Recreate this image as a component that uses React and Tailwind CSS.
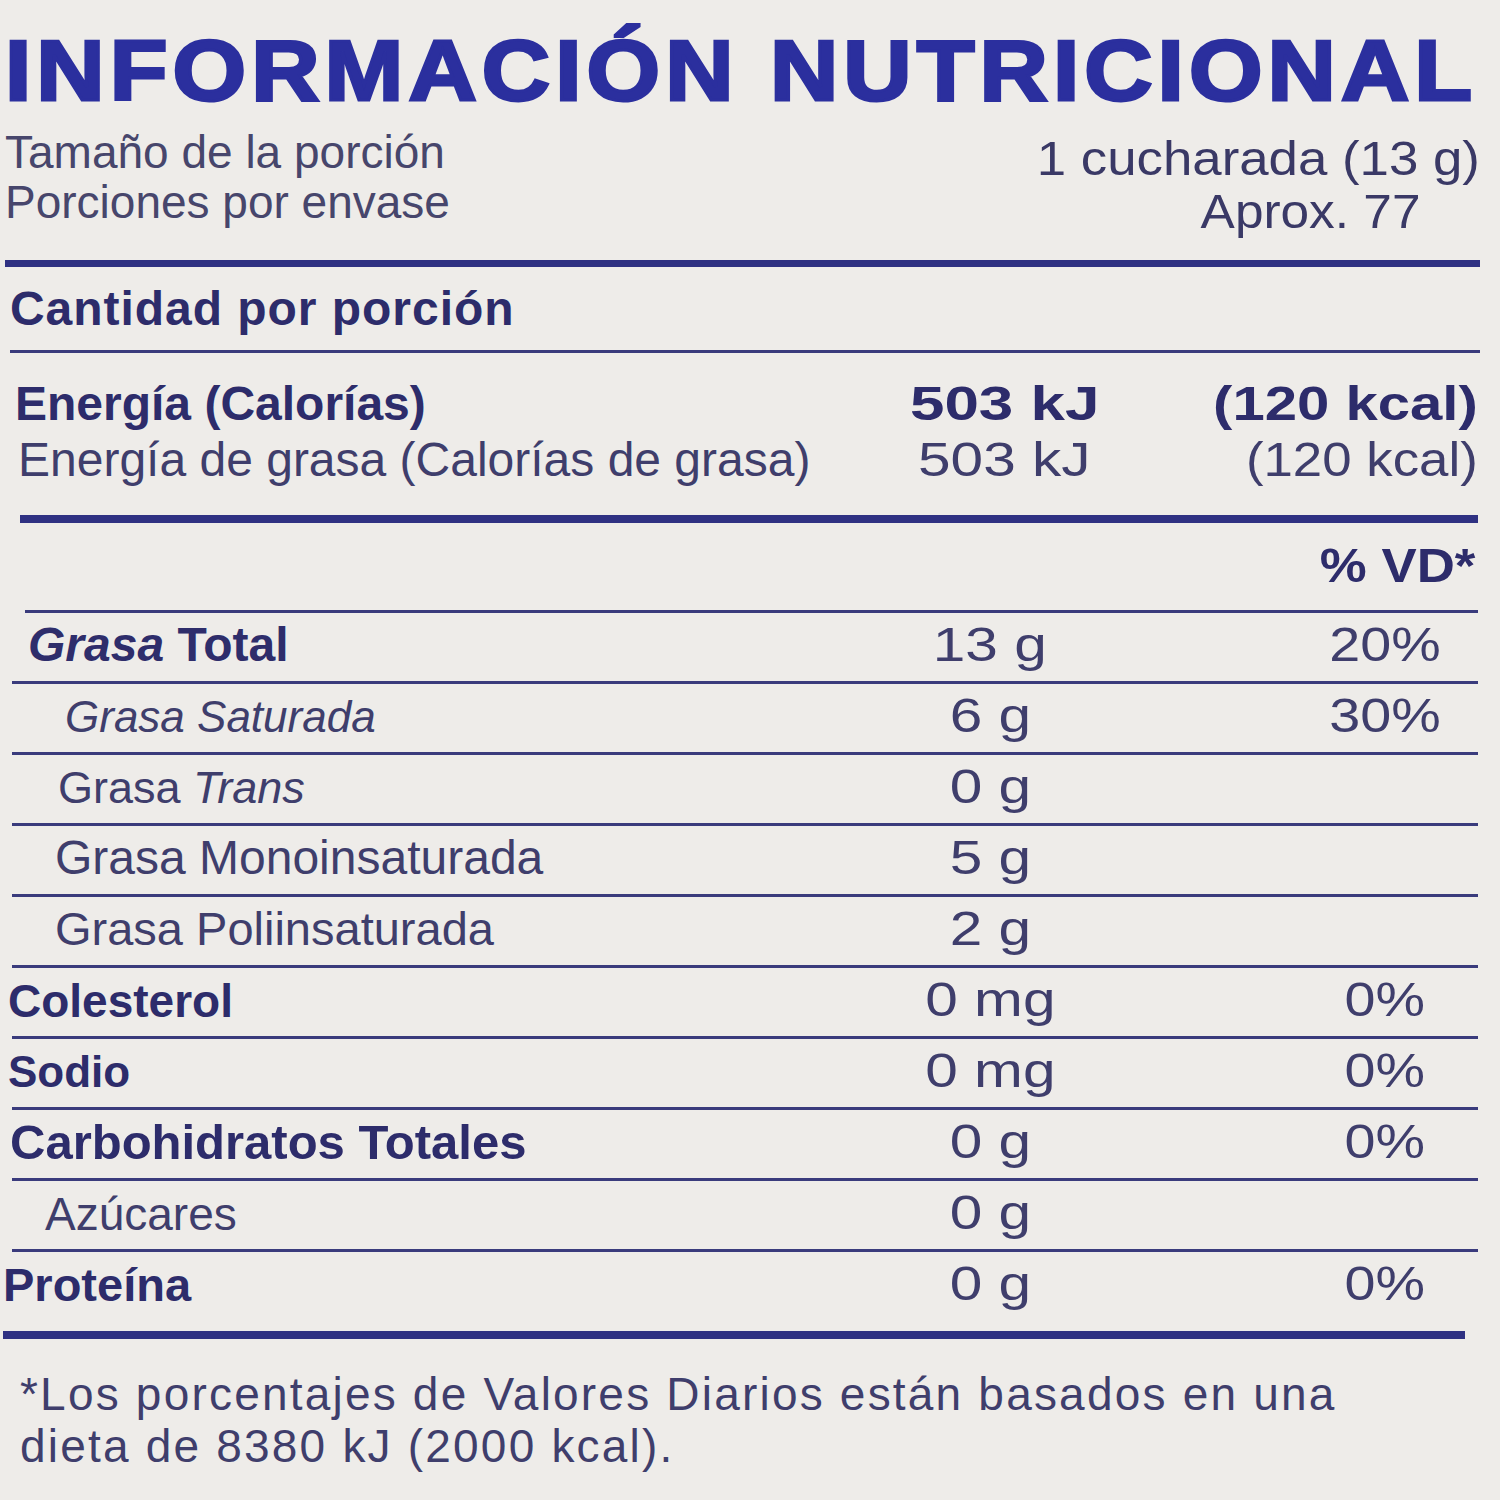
import React from "react";

const rows = [
  {
    label: (
      <span className="font-bold text-[#2e2d6b]">
        <span className="italic">Grasa</span> Total
      </span>
    ),
    amount: "13 g",
    pct: "20%",
    lab: "pl-[28px] text-[48px]",
  },
  { label: <span className="italic">Grasa Saturada</span>, amount: "6 g", pct: "30%", lab: "pl-[65px] text-[44px] pt-[3px]" },
  {
    label: (
      <span>
        Grasa <span className="italic">Trans</span>
      </span>
    ),
    amount: "0 g",
    pct: "",
    lab: "pl-[58px] text-[45px] pt-[2px]",
  },
  { label: <span>Grasa Monoinsaturada</span>, amount: "5 g", pct: "", lab: "pl-[55px] text-[48px]" },
  { label: <span>Grasa Poliinsaturada</span>, amount: "2 g", pct: "", lab: "pl-[55px] text-[47px]" },
  {
    label: <span className="font-bold text-[#2d2c6b]">Colesterol</span>,
    amount: "0 mg",
    pct: "0%",
    lab: "pl-[8px] text-[46px] pt-[2px]",
  },
  {
    label: <span className="font-bold text-[#2d2c6b]">Sodio</span>,
    amount: "0 mg",
    pct: "0%",
    lab: "pl-[8px] text-[44px] pt-[3px]",
  },
  {
    label: <span className="font-bold text-[#2d2c6b]">Carbohidratos Totales</span>,
    amount: "0 g",
    pct: "0%",
    lab: "pl-[10px] text-[49px]",
  },
  { label: <span>Azúcares</span>, amount: "0 g", pct: "", lab: "pl-[45px] text-[46px] pt-[2px]" },
  {
    label: <span className="font-bold text-[#2d2c6b]">Proteína</span>,
    amount: "0 g",
    pct: "0%",
    lab: "pl-[3px] text-[47px] pt-[1px]",
    tall: true,
  },
];

function Row({ r }) {
  return (
    <div
      className={
        "grid grid-cols-[890px_200px_195px_200px] items-start pt-[8px] leading-none " +
        (r.tall ? "h-[79px]" : "h-[68px]")
      }
    >
      <div className={r.lab}>{r.label}</div>
      <div className="text-center text-[48px]">
        <span className="inline-block scale-x-[1.22]">{r.amount}</span>
      </div>
      <div></div>
      <div className="text-center text-[48px]">
        <span className="inline-block scale-x-[1.16]">{r.pct}</span>
      </div>
    </div>
  );
}

function Line() {
  return <div className="ml-[12px] mr-[22px] h-[3px] bg-[#3a3b7c]"></div>;
}

export default function App() {
  return (
    <div className="h-[1500px] w-[1500px] overflow-hidden bg-[#eeece9] font-['Liberation_Sans',Arial,sans-serif] text-[#3f3e6c]">
      {/* Title */}
      <div className="h-[112px] pl-[5px] pt-[27px]">
        <h1 className="inline-block origin-left scale-x-[1.1] whitespace-nowrap text-[86px] font-bold leading-none tracking-[4.6px] text-[#2b2f9e] [-webkit-text-stroke:3px_#2b2f9e]">
          INFORMACIÓN NUTRICIONAL
        </h1>
      </div>

      {/* Serving */}
      <div className="flex h-[148px]">
        <div className="flex-1 pl-[5px] pt-[15px] text-[46px] leading-[50px] text-[#47466c]">
          <div>Tamaño de la porción</div>
          <div>Porciones por envase</div>
        </div>
        <div className="pr-[20px] pt-[20px] text-right text-[48px] leading-[53px] text-[#3a3966]">
          <div>
            <span className="inline-block origin-right scale-x-[1.1]">1 cucharada (13 g)</span>
          </div>
          <div className="mr-[60px]">
            <span className="inline-block origin-right scale-x-[1.07]">Aprox. 77</span>
          </div>
        </div>
      </div>
      <div className="ml-[5px] mr-[20px] h-[7px] bg-[#2f3182]"></div>

      {/* Cantidad */}
      <div className="h-[83px] pl-[10px] pt-[18px] text-[48px] font-bold leading-none tracking-[0.02em] text-[#2d2c6b]">
        Cantidad por porción
      </div>
      <div className="ml-[10px] mr-[20px] h-[3px] bg-[#3a3b7c]"></div>

      {/* Energy */}
      <div className="flex h-[162px] flex-col gap-[8px] pt-[27px] text-[48px] leading-none">
        <div className="flex font-bold text-[#2d2c6b]">
          <div className="w-[910px] pl-[15px]">Energía (Calorías)</div>
          <div className="w-[300px]">
            <span className="inline-block origin-left scale-x-[1.29]">503 kJ</span>
          </div>
          <div className="flex-1 pr-[22px] text-right">
            <span className="inline-block origin-right scale-x-[1.21]">(120 kcal)</span>
          </div>
        </div>
        <div className="flex">
          <div className="w-[918px] pl-[18px]">Energía de grasa (Calorías de grasa)</div>
          <div className="w-[300px]">
            <span className="inline-block origin-left scale-x-[1.22]">503 kJ</span>
          </div>
          <div className="flex-1 pr-[22px] text-right">
            <span className="inline-block origin-right scale-x-[1.1]">(120 kcal)</span>
          </div>
        </div>
      </div>
      <div className="ml-[20px] mr-[22px] h-[8px] bg-[#2f3182]"></div>

      {/* %VD */}
      <div className="h-[87px] pr-[25px] pt-[19px] text-right text-[48px] font-bold leading-none text-[#2d2c6b]">
        <span className="inline-block origin-right scale-x-[1.1]">% VD*</span>
      </div>
      <div className="ml-[25px] mr-[22px] h-[3px] bg-[#3a3b7c]"></div>

      {/* Nutrient rows */}
      {rows.map((r, i) => (
        <React.Fragment key={i}>
          <Row r={r} />
          {i < rows.length - 1 && <Line />}
        </React.Fragment>
      ))}
      <div className="ml-[3px] mr-[35px] h-[8px] bg-[#2f3182]"></div>

      {/* Footer */}
      <div className="pl-[20px] pt-[29px] text-[46px] leading-[52px] tracking-[2.2px]">
        <div>*Los porcentajes de Valores Diarios están basados en una</div>
        <div>dieta de 8380 kJ (2000 kcal).</div>
      </div>
    </div>
  );
}
